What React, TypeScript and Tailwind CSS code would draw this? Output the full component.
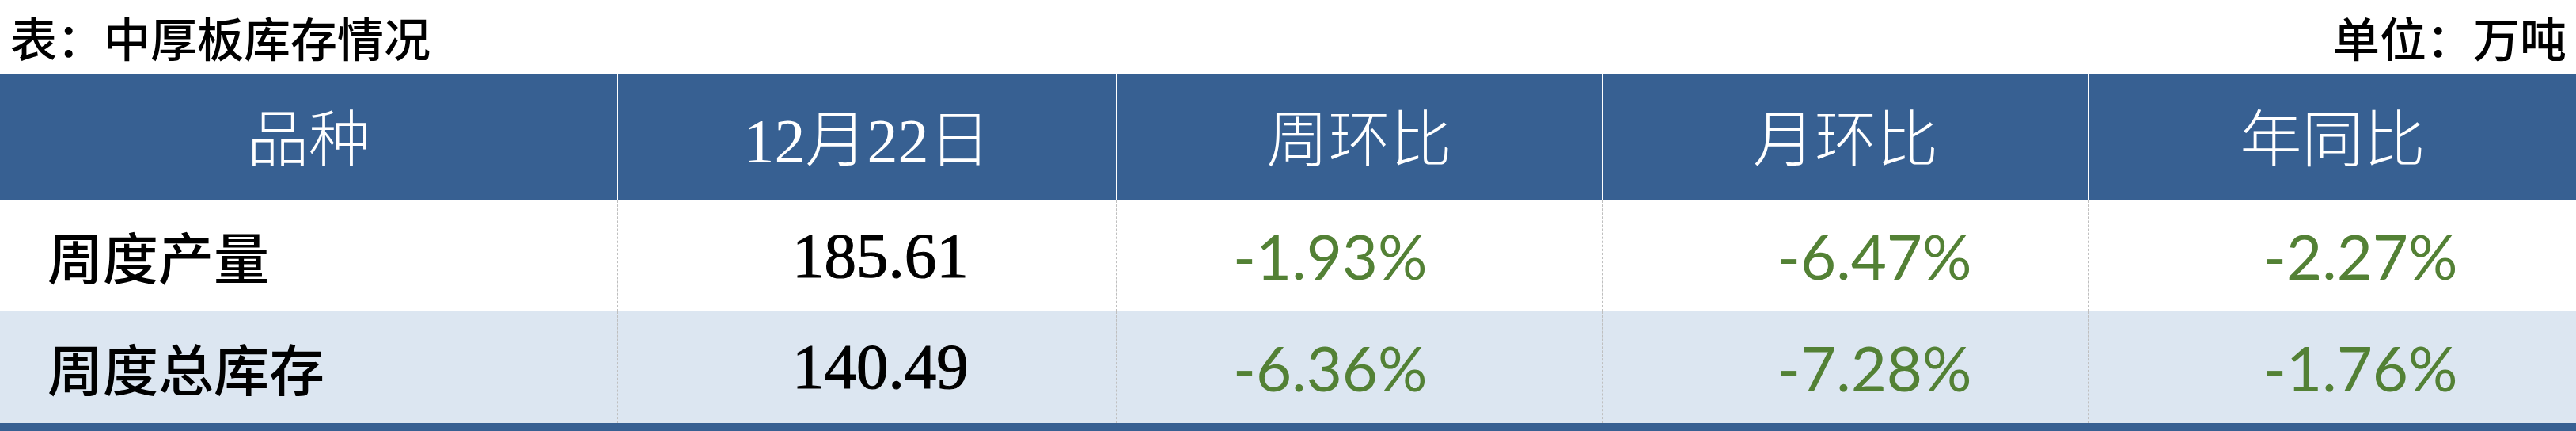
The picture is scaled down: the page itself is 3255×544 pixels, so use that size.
import React from 'react';

const sans = "font-['Noto_Sans_CJK_SC',sans-serif]";
const head = "font-['Liberation_Serif','Noto_Sans_CJK_SC',serif]";

const rows = [
    { name: '周度产量', value: '185.61', wow: '-1.93%', mom: '-6.47%', yoy: '-2.27%', bg: 'bg-white' },
    { name: '周度总库存', value: '140.49', wow: '-6.36%', mom: '-7.28%', yoy: '-1.76%', bg: 'bg-[#dce6f1]' },
];

const pct = "font-['Lato',sans-serif] text-[78px] text-[#538135] leading-none";

export default function App() {
    return (
        <div className="w-[3255px] h-[544px] bg-white overflow-hidden">
            <div className={`h-[93px] flex items-center justify-between pl-[13px] pr-[12px] text-[59px] font-medium text-black leading-none ${sans}`}>
                <span>表：中厚板库存情况</span>
                <span>单位：万吨</span>
            </div>

            <div className="grid grid-cols-[780px_630px_614px_615px_616px]">
                {['品种', '12月22日', '周环比', '月环比', '年同比'].map((h, i) => (
                    <div
                        key={h}
                        className={`h-[160px] bg-[#376092] flex items-center justify-center text-white text-[78px] font-light leading-none pt-[10px] ${head} ${i > 0 ? 'border-l border-white' : ''}`}
                    >
                        <span>{h}</span>
                    </div>
                ))}

                {rows.map((r, idx) => (
                    <React.Fragment key={r.name}>
                        <div className={`${idx === 0 ? 'h-[140px]' : 'h-[141px]'} ${r.bg} flex items-center pl-[60px] text-[70px] font-medium text-black leading-none ${sans}`}>
                            {r.name}
                        </div>
                        <div className={`${r.bg} flex items-center pl-[220px] border-l border-dashed border-[#bfbfbf] font-['Liberation_Serif',serif] text-[81px] text-black leading-none [-webkit-text-stroke:1.2px_black]`}>
                            {r.value}
                        </div>
                        <div className={`${r.bg} flex items-center pl-[147px] border-l border-dashed border-[#bfbfbf] ${pct}`}>
                            {r.wow}
                        </div>
                        <div className={`${r.bg} flex items-center pl-[221px] border-l border-dashed border-[#bfbfbf] ${pct}`}>
                            {r.mom}
                        </div>
                        <div className={`${r.bg} flex items-center pl-[220px] border-l border-dashed border-[#bfbfbf] ${pct}`}>
                            {r.yoy}
                        </div>
                    </React.Fragment>
                ))}
            </div>

            <div className="h-[10px] bg-[#376092]" />
        </div>
    );
}
